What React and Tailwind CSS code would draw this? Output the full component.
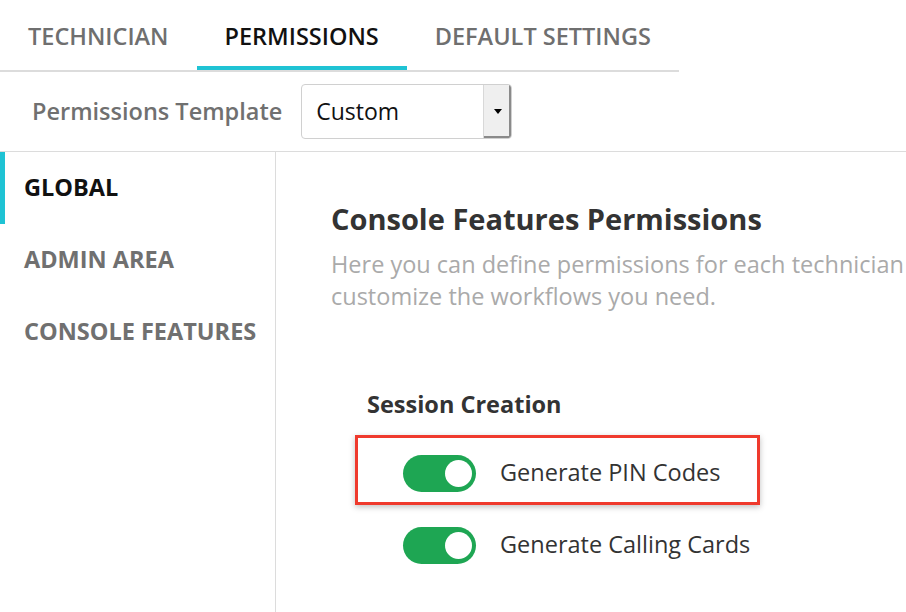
import { useState } from 'react'

const tabs = ['TECHNICIAN', 'PERMISSIONS', 'DEFAULT SETTINGS']
const sections = ['GLOBAL', 'ADMIN AREA', 'CONSOLE FEATURES']

function Toggle({ on, onChange }) {
  return (
    <button
      onClick={onChange}
      className={`flex h-[37px] w-[73px] shrink-0 items-center rounded-full px-[4px] transition ${
        on ? 'justify-end bg-[#1ea653]' : 'justify-start bg-[#c8c8c8]'
      }`}
    >
      <span className="h-[27px] w-[27px] rounded-full bg-white" />
    </button>
  )
}

export default function App() {
  const [tab, setTab] = useState('PERMISSIONS')
  const [section, setSection] = useState('GLOBAL')
  const [pins, setPins] = useState(true)
  const [cards, setCards] = useState(true)

  return (
    <div className="h-[612px] w-[906px] overflow-hidden bg-white font-['Open_Sans',sans-serif]">
      {/* top tabs */}
      <div className="inline-flex border-b-2 border-[#dcdcdc]">
        {tabs.map((t) => (
          <button
            key={t}
            onClick={() => setTab(t)}
            className={`flex h-[70px] items-center px-7 pt-[8px] text-[23.5px] font-semibold ${
              tab === t
                ? 'border-b-4 border-[#1fc3d4] text-[#111]'
                : 'border-b-4 border-transparent text-[#6f6f6f]'
            }`}
          >
            {t}
          </button>
        ))}
      </div>

      {/* template row */}
      <div className="flex h-[80px] items-center gap-[19px] border-b border-[#dcdcdc] pl-8">
        <span className="text-[23.5px] font-semibold text-[#707070]">Permissions Template</span>
        <div className="flex h-[55px] w-[211px] overflow-hidden rounded-[4px] border border-[#d0d0d0]">
          <div className="flex flex-1 items-center pl-[14px] text-[23px] text-[#111]">Custom</div>
          <div className="flex w-[28px] items-center justify-center border-l border-[#d8d8d8] bg-[#efefef] shadow-[inset_-2px_-2px_0_#8a8a8a]">
            <span className="h-0 w-0 border-x-[4px] border-t-[5px] border-x-transparent border-t-black" />
          </div>
        </div>
      </div>

      <div className="flex h-full">
        {/* side nav */}
        <div className="w-[276px] shrink-0 border-r border-[#dcdcdc]">
          {sections.map((s) => (
            <button
              key={s}
              onClick={() => setSection(s)}
              className={`flex h-[72px] w-full items-center border-l-[5px] pl-[19px] text-[23.5px] font-bold ${
                section === s ? 'border-[#1fc3d4] text-[#111]' : 'border-transparent text-[#707070]'
              }`}
            >
              {s}
            </button>
          ))}
        </div>

        {/* content */}
        <div className="flex-1 pl-[55px] pt-[48px]">
          <h2 className="whitespace-nowrap text-[29px] font-bold leading-[38px] text-[#333]">
            Console Features Permissions
          </h2>
          <p className="mt-[10px] whitespace-nowrap text-[23.5px] leading-[32px] text-[#aaa]">
            Here you can define permissions for each technician
            <br />
            customize the workflows you need.
          </p>

          <div className="ml-[36px] mt-[77px]">
            <h3 className="text-[23.5px] font-bold leading-[30px] text-[#333]">Session Creation</h3>

            <div className="-ml-[12px] mt-[16px] flex h-[70px] w-[405px] items-center gap-[24px] border-[3px] border-[#ef3a2d] pl-[45px] pt-[6px] shadow-[0_2px_6px_rgba(0,0,0,0.25)]">
              <Toggle on={pins} onChange={() => setPins((v) => !v)} />
              <span className="text-[23.5px] text-[#333]">Generate PIN Codes</span>
            </div>

            <div className="-ml-[12px] mt-[5px] flex h-[70px] items-center gap-[24px] pl-[48px]">
              <Toggle on={cards} onChange={() => setCards((v) => !v)} />
              <span className="text-[23.5px] text-[#333]">Generate Calling Cards</span>
            </div>
          </div>
        </div>
      </div>
    </div>
  )
}
